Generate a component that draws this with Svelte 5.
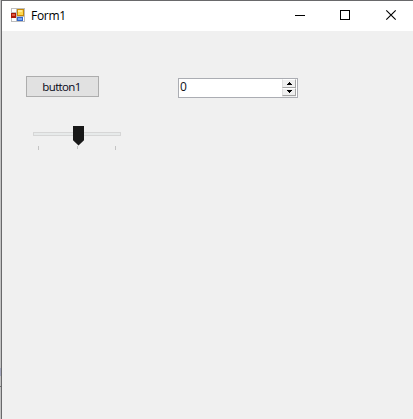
<script>
  let value = $state(0);
</script>

<div class="screen">
  <div class="edge"><i></i><b></b></div>
  <main class="window">
    <header>
      <svg class="logo" width="14" height="14" shape-rendering="crispEdges">
        <path fill="#bdbdbd" d="M0 0h14v14H0z" />
        <path fill="#fff" d="M1 1h4v3H1zM1 10h4v3H1zM6 1h7v7H6zM6 9h7v4H6z" />
        <path fill="#a81808" d="M0 5h5v5H0z" />
        <path fill="#e05a43" d="M1 6h3v2H1z" />
        <path fill="#c78a08" d="M6 1h7v7H6z" />
        <path fill="#ffd84f" d="M7 2h5v5H7z" />
        <path fill="#ffeb94" d="M7 2h4v2H7z" />
        <path fill="#3568c9" d="M6 9h6v4H6z" />
        <path fill="#79a9f5" d="M7 10h4v2H7z" />
      </svg>
      <span class="title">Form1</span>
      <svg class="controls" width="101" height="10" shape-rendering="crispEdges">
        <path d="M0 5h10v1H0z" />
        <path fill-rule="evenodd" d="M45 0h10v10H45zM46 1v8h8V1z" />
        <path class="cross" shape-rendering="auto" d="M91.3.3l9.4 9.4M100.7.3l-9.4 9.4" />
      </svg>
    </header>
    <section>
      <div class="left">
        <button class="push">button1</button>
        <div class="slider">
          <div class="track"></div>
          <svg class="thumb" width="11" height="20"><path fill="#181818" d="M0 0h11v14.2L5.5 19.6 0 14.2z" /></svg>
          <div class="ticks"><i></i><i></i><i></i></div>
        </div>
      </div>
      <div class="number">
        <span>{value}</span>
        <div class="spin">
          <button aria-label="Increase" onclick={() => value++}><svg width="5" height="3" shape-rendering="crispEdges"><path d="M2 0h1v1H2zM1 1h3v1H1zM0 2h5v1H0z" /></svg></button>
          <button aria-label="Decrease" onclick={() => value--}><svg width="5" height="3" shape-rendering="crispEdges"><path d="M0 0h5v1H0zM1 1h3v1H1zM2 2h1v1H2z" /></svg></button>
        </div>
      </div>
    </section>
  </main>
</div>

<style>
  :global(body) { margin: 0; overflow: hidden; }
  * { box-sizing: border-box; }
  .screen { display: flex; width: 413px; height: 419px; font-family: "Open Sans", "Noto Sans", sans-serif; color: #000; }
  .edge { width: 1px; background: #c3c3c3; padding-top: 368px; }
  .edge i { display: block; height: 8px; background: #a3a6bd; }
  .edge b { display: block; height: 1px; margin-top: 10px; background: #707070; }
  .window { flex: 1; border: solid #69696b; border-width: 1px 0 0 1px; background: #f0f0f0; }
  header { display: flex; height: 30px; background: #fff; padding: 0 17px 0 9px; }
  .logo { margin-top: 7px; }
  .title { margin-left: 6px; font-size: 12px; line-height: 30px; letter-spacing: -.3px; }
  .controls { margin: 9px 0 0 auto; overflow: visible; }
  .cross { fill: none; stroke: #000; stroke-width: 1.15; }
  section { display: flex; padding: 45px 0 0 24px; }
  .left { width: 152px; }
  button { display: flex; align-items: center; justify-content: center; margin: 0; padding: 0; font-family: inherit; }
  .push { width: 73px; height: 21px; border: 1px solid #adadad; background: #e1e1e1; color: #080818; padding-right: 2px; font-size: 11.5px; line-height: 19px; letter-spacing: -.65px; }
  .number { display: flex; width: 120px; height: 20px; margin-top: 2px; border: 1px solid #abadb3; background: #fff; padding: 0 1px; justify-content: space-between; }
  .number span { font-size: 12px; line-height: 16px; color: #101018; }
  .spin { width: 14px; height: 18px; background: #efefef; }
  .spin button { width: 14px; height: 9px; border: 1px solid; border-color: #fff #a5a5a5 #a5a5a5 #dedede; background: #efefef; }
  .spin button + button { height: 8px; padding-bottom: 1px; }
  .slider { display: grid; width: 88px; margin: 29px 0 0 7px; }
  .slider > * { grid-area: 1 / 1; }
  .track { height: 4px; margin-top: 6px; border: 1px solid #d6d6d6; background: #e7eaea; }
  .thumb { margin-left: 40px; }
  .ticks { display: flex; width: 78px; height: 4px; margin: 20px 0 0 5px; justify-content: space-between; }
  .ticks i { width: 1px; height: 4px; background: #c4c4c4; }
  .ticks i:nth-child(2) { height: 3px; }
</style>
